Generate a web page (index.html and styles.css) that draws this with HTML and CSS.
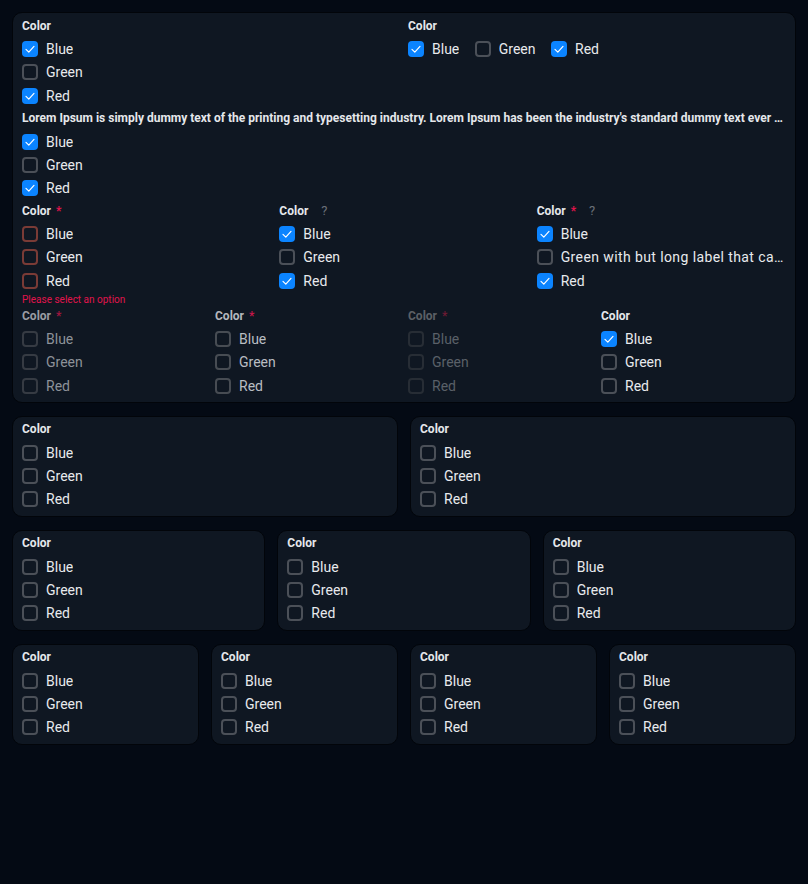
FILE: index.html
```html
<!DOCTYPE html>
<html>
<head>
<meta charset="utf-8">
<link rel="stylesheet" href="styles.css">
</head>
<body>
<div class="page">
  <div class="card main">
    <div class="grid2">
      <div class="group">
        <div class="glabel">Color</div>
        <label class="opt on"><span class="box"><svg viewBox="0 0 16 16"><polyline points="4,8.4 6.8,11.1 12,5.4"/></svg></span><span class="txt">Blue</span></label>
        <label class="opt"><span class="box"></span><span class="txt">Green</span></label>
        <label class="opt on"><span class="box"><svg viewBox="0 0 16 16"><polyline points="4,8.4 6.8,11.1 12,5.4"/></svg></span><span class="txt">Red</span></label>
      </div>
      <div class="group hgroup">
        <div class="glabel">Color</div>
        <div class="hopts">
          <label class="opt on"><span class="box"><svg viewBox="0 0 16 16"><polyline points="4,8.4 6.8,11.1 12,5.4"/></svg></span><span class="txt">Blue</span></label>
          <label class="opt"><span class="box"></span><span class="txt">Green</span></label>
          <label class="opt on"><span class="box"><svg viewBox="0 0 16 16"><polyline points="4,8.4 6.8,11.1 12,5.4"/></svg></span><span class="txt">Red</span></label>
        </div>
      </div>
    </div>
    <div class="group">
      <div class="glabel long">Lorem Ipsum is simply dummy text of the printing and typesetting industry. Lorem Ipsum has been the industry's standard dummy text ever since the 1500s, when an unknown printer took a galley of type.</div>
      <label class="opt on"><span class="box"><svg viewBox="0 0 16 16"><polyline points="4,8.4 6.8,11.1 12,5.4"/></svg></span><span class="txt">Blue</span></label>
      <label class="opt"><span class="box"></span><span class="txt">Green</span></label>
      <label class="opt on"><span class="box"><svg viewBox="0 0 16 16"><polyline points="4,8.4 6.8,11.1 12,5.4"/></svg></span><span class="txt">Red</span></label>
    </div>
    <div class="grid3">
      <div class="group error">
        <div class="glabel">Color<span class="req">*</span></div>
        <label class="opt"><span class="box"></span><span class="txt">Blue</span></label>
        <label class="opt"><span class="box"></span><span class="txt">Green</span></label>
        <label class="opt"><span class="box"></span><span class="txt">Red</span></label>
        <div class="err">Please select an option</div>
      </div>
      <div class="group">
        <div class="glabel">Color<span class="help">?</span></div>
        <label class="opt on"><span class="box"><svg viewBox="0 0 16 16"><polyline points="4,8.4 6.8,11.1 12,5.4"/></svg></span><span class="txt">Blue</span></label>
        <label class="opt"><span class="box"></span><span class="txt">Green</span></label>
        <label class="opt on"><span class="box"><svg viewBox="0 0 16 16"><polyline points="4,8.4 6.8,11.1 12,5.4"/></svg></span><span class="txt">Red</span></label>
      </div>
      <div class="group">
        <div class="glabel">Color<span class="req">*</span><span class="help">?</span></div>
        <label class="opt on"><span class="box"><svg viewBox="0 0 16 16"><polyline points="4,8.4 6.8,11.1 12,5.4"/></svg></span><span class="txt">Blue</span></label>
        <label class="opt"><span class="box"></span><span class="txt long">Green with but long label that can not fit in the available space</span></label>
        <label class="opt on"><span class="box"><svg viewBox="0 0 16 16"><polyline points="4,8.4 6.8,11.1 12,5.4"/></svg></span><span class="txt">Red</span></label>
      </div>
    </div>
    <div class="grid4">
      <div class="group dis1">
        <div class="glabel">Color<span class="req">*</span></div>
        <label class="opt"><span class="box"></span><span class="txt">Blue</span></label>
        <label class="opt"><span class="box"></span><span class="txt">Green</span></label>
        <label class="opt"><span class="box"></span><span class="txt">Red</span></label>
      </div>
      <div class="group dis2">
        <div class="glabel">Color<span class="req">*</span></div>
        <label class="opt"><span class="box"></span><span class="txt">Blue</span></label>
        <label class="opt"><span class="box"></span><span class="txt">Green</span></label>
        <label class="opt"><span class="box"></span><span class="txt">Red</span></label>
      </div>
      <div class="group dis3">
        <div class="glabel">Color<span class="req">*</span></div>
        <label class="opt"><span class="box"></span><span class="txt">Blue</span></label>
        <label class="opt"><span class="box"></span><span class="txt">Green</span></label>
        <label class="opt"><span class="box"></span><span class="txt">Red</span></label>
      </div>
      <div class="group">
        <div class="glabel">Color</div>
        <label class="opt on"><span class="box"><svg viewBox="0 0 16 16"><polyline points="4,8.4 6.8,11.1 12,5.4"/></svg></span><span class="txt">Blue</span></label>
        <label class="opt"><span class="box"></span><span class="txt">Green</span></label>
        <label class="opt"><span class="box"></span><span class="txt">Red</span></label>
      </div>
    </div>
  </div>

  <div class="cards c2">
    <div class="card"><div class="group"><div class="glabel">Color</div><label class="opt"><span class="box"></span><span class="txt">Blue</span></label><label class="opt"><span class="box"></span><span class="txt">Green</span></label><label class="opt"><span class="box"></span><span class="txt">Red</span></label></div></div>
    <div class="card"><div class="group"><div class="glabel">Color</div><label class="opt"><span class="box"></span><span class="txt">Blue</span></label><label class="opt"><span class="box"></span><span class="txt">Green</span></label><label class="opt"><span class="box"></span><span class="txt">Red</span></label></div></div>
  </div>

  <div class="cards c3">
    <div class="card"><div class="group"><div class="glabel">Color</div><label class="opt"><span class="box"></span><span class="txt">Blue</span></label><label class="opt"><span class="box"></span><span class="txt">Green</span></label><label class="opt"><span class="box"></span><span class="txt">Red</span></label></div></div>
    <div class="card"><div class="group"><div class="glabel">Color</div><label class="opt"><span class="box"></span><span class="txt">Blue</span></label><label class="opt"><span class="box"></span><span class="txt">Green</span></label><label class="opt"><span class="box"></span><span class="txt">Red</span></label></div></div>
    <div class="card"><div class="group"><div class="glabel">Color</div><label class="opt"><span class="box"></span><span class="txt">Blue</span></label><label class="opt"><span class="box"></span><span class="txt">Green</span></label><label class="opt"><span class="box"></span><span class="txt">Red</span></label></div></div>
  </div>

  <div class="cards c4">
    <div class="card"><div class="group"><div class="glabel">Color</div><label class="opt"><span class="box"></span><span class="txt">Blue</span></label><label class="opt"><span class="box"></span><span class="txt">Green</span></label><label class="opt"><span class="box"></span><span class="txt">Red</span></label></div></div>
    <div class="card"><div class="group"><div class="glabel">Color</div><label class="opt"><span class="box"></span><span class="txt">Blue</span></label><label class="opt"><span class="box"></span><span class="txt">Green</span></label><label class="opt"><span class="box"></span><span class="txt">Red</span></label></div></div>
    <div class="card"><div class="group"><div class="glabel">Color</div><label class="opt"><span class="box"></span><span class="txt">Blue</span></label><label class="opt"><span class="box"></span><span class="txt">Green</span></label><label class="opt"><span class="box"></span><span class="txt">Red</span></label></div></div>
    <div class="card"><div class="group"><div class="glabel">Color</div><label class="opt"><span class="box"></span><span class="txt">Blue</span></label><label class="opt"><span class="box"></span><span class="txt">Green</span></label><label class="opt"><span class="box"></span><span class="txt">Red</span></label></div></div>
  </div>
</div>
</body>
</html>
```

FILE: styles.css
```css
* { box-sizing: border-box; }
html, body { margin: 0; padding: 0; }
body {
  background: #040a14;
  font-family: Roboto, "Noto Sans", sans-serif;
  color: #e8eaed;
  width: 808px;
  height: 884px;
}
.page {
  padding: 12px;
  display: flex;
  flex-direction: column;
  gap: 13px;
}
.card {
  background: #0f1722;
  border: 1px solid #02050a;
  border-radius: 10px;
  padding: 4px 9px 2.5px;
  min-width: 0;
}
.card.main { padding: 5px 9px 2px; }
.grid2 { display: grid; grid-template-columns: 1fr 1fr; column-gap: 8px; }
.grid3 { display: grid; grid-template-columns: 1fr 1fr 1fr; column-gap: 8px; }
.grid4 { display: grid; grid-template-columns: 1fr 1fr 1fr 1fr; column-gap: 8px; }
.cards { display: grid; column-gap: 12px; }
.c2 { grid-template-columns: 1fr 1fr; }
.c3 { grid-template-columns: 1fr 1fr 1fr; }
.c4 { grid-template-columns: 1fr 1fr 1fr 1fr; }

.group { min-width: 0; padding-bottom: 3px; }
.glabel {
  font-size: 12px;
  font-weight: 700;
  line-height: 16px;
  height: 16px;
  color: #e5e7eb;
  margin-bottom: 3.5px;
  display: flex;
  align-items: center;
  white-space: nowrap;
}
.glabel.long {
  display: block;
  overflow: hidden;
  text-overflow: ellipsis;
}
.req {
  color: #e0144c;
  margin-left: 5px;
  font-weight: 700;
}
.help {
  color: #6b7078;
  font-weight: 400;
  font-size: 13px;
  margin-left: 13px;
}
.opt {
  display: flex;
  align-items: center;
  height: 23.33px;
  font-size: 14px;
  color: #e8eaed;
  gap: 8px;
  min-width: 0;
}
.txt {
  white-space: nowrap;
  overflow: hidden;
  text-overflow: ellipsis;
  min-width: 0;
}
.txt.long { letter-spacing: 0.4px; }
.box {
  width: 16px;
  height: 16px;
  flex: none;
  border: 2px solid #4b5058;
  border-radius: 4px;
  display: block;
}
.opt.on .box {
  background: #0b84ff;
  border: 0;
}
.box svg {
  display: block;
  width: 16px;
  height: 16px;
}
.box polyline {
  fill: none;
  stroke: #ffffff;
  stroke-width: 1.2;
  stroke-linecap: round;
  stroke-linejoin: round;
}
.hopts { display: flex; gap: 15.5px; }

.error { padding-bottom: 0; }
.error .box { border-color: #7a3b36; }
.err {
  font-size: 10px;
  line-height: 15.5px;
  color: #e0144c;
}

.dis1 .glabel { color: #9a9da3; }
.dis1 .req { color: #a0163f; }
.dis1 .box { border-color: #363b43; }
.dis1 .opt { color: #8d9299; }

.dis2 .glabel { color: #b5b8bd; }
.dis2 .req { color: #c4164a; }
.dis2 .box { border-color: #474c53; }
.dis2 .opt { color: #b9bdc2; }

.dis3 .glabel { color: #5c6066; }
.dis3 .req { color: #6b1a33; }
.dis3 .box { border-color: #272d35; }
.dis3 .opt { color: #5a6068; }
```
